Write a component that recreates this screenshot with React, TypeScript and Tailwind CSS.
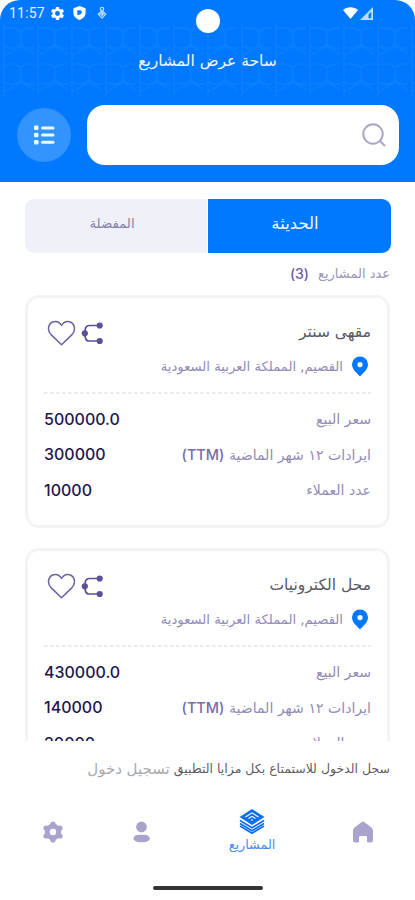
import type { ReactNode } from "react";

type Project = { id: string; title: string; location: string; price: string; revenue: string; customers: string };

const LOCATION = "القصيم, المملكة العربية السعودية";

const projects: Project[] = [
  { id: "p1", title: "مقهى سنتر", location: LOCATION, price: "500000.0", revenue: "300000", customers: "10000" },
  { id: "p2", title: "محل الكترونيات", location: LOCATION, price: "430000.0", revenue: "140000", customers: "20000" },
];

const GEAR =
  "M19.14 12.94c.04-.3.06-.61.06-.94s-.02-.64-.07-.94l2.03-1.58a.49.49 0 0 0 .12-.61l-1.92-3.32a.49.49 0 0 0-.59-.22l-2.39.96a7 7 0 0 0-1.62-.94l-.36-2.54a.48.48 0 0 0-.48-.41h-3.84a.48.48 0 0 0-.47.41l-.36 2.54c-.59.24-1.13.57-1.62.94l-2.39-.96a.48.48 0 0 0-.59.22L2.74 8.87a.48.48 0 0 0 .12.61l2.03 1.58a7.8 7.8 0 0 0 0 1.88l-2.03 1.58a.49.49 0 0 0-.12.61l1.92 3.32c.12.22.37.29.59.22l2.39-.96c.5.38 1.03.7 1.62.94l.36 2.54c.05.24.24.41.48.41h3.84c.24 0 .44-.17.47-.41l.36-2.54a7 7 0 0 0 1.62-.94l2.39.96c.22.08.47 0 .59-.22l1.92-3.32a.48.48 0 0 0-.12-.61zM12 15.6a3.6 3.6 0 1 1 0-7.2 3.6 3.6 0 0 1 0 7.2z";

function StatusBar() {
  return (
    <div className="flex h-[26px] items-center px-[9px] text-white" dir="ltr">
      <span className="w-[36px] font-[Roboto] text-[14px] tracking-[0.2px] text-[#e6f1ff]">11:57</span>
      <svg className="ml-[5px]" width="15" height="15" viewBox="1 1 22 22" fill="currentColor">
        <path d={GEAR} />
      </svg>
      <svg className="ml-[7px]" width="15" height="16" viewBox="0 0 15 16" fill="currentColor">
        <path fillRule="evenodd" d="M7.5 1 13.6 3.2v4.6c0 3.3-2.6 6-6.1 7.2-3.5-1.2-6.1-3.9-6.1-7.2V3.2zM5.3 5.2v4.800h1l2.500-.9 1.300-2-1.500-1.900z" />
      </svg>
      <svg className="ml-[9px]" width="12" height="14" viewBox="0 0 12 14" fill="none" stroke="currentColor" strokeWidth="1.2" opacity="0.75">
        <circle cx="6" cy="3" r="1.7" />
        <path d="M6 4.700 9.800 8 6 12.200 2.200 8zM4.500 8 6 6.500 7.500 8 6 9.500z" />
      </svg>
      <div className="flex-1" />
      <svg className="mr-[32px]" width="32" height="15" viewBox="0 0 32 15" fill="currentColor">
        <path d="M1 4.1C5 .3 12 .3 16 4.1L8.5 13.1z" />
        <path d="M31 1v13H18zm-1.8 4.8L26.5 8.5v3.8h2.7z" fillRule="evenodd" opacity=".75" />
      </svg>
    </div>
  );
}

function HeaderPattern() {
  return (
    <svg className="absolute left-0 top-[24px]" width="415" height="73" fill="none">
      <defs>
        <pattern id="lattice" width="34" height="36" patternUnits="userSpaceOnUse">
          <path
            d="M4 0v36M4 5Q14 2 21 7Q28 2 38 5M4 22Q14 27 21 20Q28 27 38 22M21 7v13M4 32 21 22 38 32"
            stroke="#3fa4ff"
            strokeOpacity="0.15"
            strokeWidth="1.6"
          />
        </pattern>
      </defs>
      <rect width="415" height="73" fill="url(#lattice)" />
    </svg>
  );
}

function Header() {
  return (
    <header className="relative h-[182px] bg-[#0078ff]">
      <HeaderPattern />
      <div className="absolute left-[196px] top-[9px] size-[24px] rounded-full bg-white" />
      <div className="relative">
        <StatusBar />
        <h1 className="pt-[23px] text-center text-[15.5px] leading-[24px] text-[#f1f6ff]">ساحة عرض المشاريع</h1>
        <div className="mt-[32px] flex items-center gap-[16px] pl-[17px] pr-[16px]" dir="ltr">
          <button className="flex size-[54px] items-center justify-center rounded-full bg-[#3393ff]">
            <svg width="22" height="20" viewBox="0 0 22 20" fill="#e8ffff">
              <rect x="1" y="0.5" width="4.5" height="4.5" rx="1.3" />
              <rect x="1" y="7.7" width="4.5" height="4.5" rx="1.3" />
              <rect x="1" y="15" width="4.5" height="4.5" rx="1.3" />
              <rect x="8" y="1.5" width="13.5" height="3" rx="1.5" />
              <rect x="8" y="8.5" width="13.5" height="3" rx="1.5" />
              <rect x="8" y="15.8" width="13.5" height="3" rx="1.5" />
            </svg>
          </button>
          <div className="flex h-[60px] flex-1 items-center justify-end rounded-[18px] bg-white pr-[12px]">
            <svg width="26" height="26" viewBox="0 0 26 26" fill="none" stroke="#aaa5c7" strokeWidth="2">
              <circle cx="12" cy="12" r="9.7" />
              <path d="m19 19 5 5" />
            </svg>
          </div>
        </div>
      </div>
    </header>
  );
}

function Row({ label, value }: { label: ReactNode; value: string }) {
  return (
    <div className="flex h-[35.5px] items-center justify-between">
      <span className="pt-[2px] text-[14.1px] text-[#918bb6]">{label}</span>
      <span className="font-[Inter] text-[16px] font-medium text-[#1d174d]">{value}</span>
    </div>
  );
}

function ProjectCard({ project }: { project: Project }) {
  return (
    <article className="h-[233px] shrink-0 rounded-[14px] border-[3px] border-[#f4f4f5] px-[16px] pt-[20px]">
      <div className="flex h-[30px] items-center justify-between">
        <h2 className="text-[15.5px] text-[#5a5762]">{project.title}</h2>
        <div className="flex items-center gap-[5px]" dir="ltr">
          <svg className="ml-[3px]" width="29" height="26" viewBox="0 0 29 26" fill="none" stroke="#6b62a0" strokeWidth="1.5" strokeLinejoin="round">
            <path d="M14.5 24.8 4 14.6C-.2 10 1.2 3.2 6.5 1.7c3.2-.9 6 .4 8 3.6 2-3.2 4.8-4.5 8-3.6 5.3 1.5 6.7 8.3 2.5 12.9z" />
          </svg>
          <svg width="23" height="24" viewBox="0 0 23 24" fill="none" stroke="#5b5098" strokeWidth="1.7">
            <path d="M18 4.5H8.500Q5 4.500 4.300 8L3.800 12.200 4.300 16.500Q5 20 8.500 20H18" />
            <g fill="#5b5098" stroke="none">
              <circle cx="18.7" cy="4.5" r="3.1" />
              <circle cx="3.8" cy="12.3" r="3.1" />
              <circle cx="18.7" cy="20" r="3.1" />
            </g>
          </svg>
        </div>
      </div>
      <div className="mt-[5px] flex h-[26px] items-center gap-[8px] pr-[2px]">
        <svg width="18" height="21" viewBox="0 0 18 21">
          <path fill="#0078ff" fillRule="evenodd" d="M9 .5a8 8 0 0 1 8 8c0 5-5.2 8.8-8 12-2.8-3.2-8-7-8-12a8 8 0 0 1 8-8zm0 5.500a2.600 2.600 0 1 0 0 5.200A2.600 2.600 0 0 0 9 6z" />
        </svg>
        <span className="pt-px text-[13.2px] text-[#918bb6]">{project.location}</span>
      </div>
      <svg className="mb-[7px] mt-[13px] block w-full" height="2" viewBox="0 0 327 2">
        <path d="M0 1h327" stroke="#e3e3eb" strokeWidth="1.5" strokeDasharray="3.5 2.5" />
      </svg>
      <Row label="سعر البيع" value={project.price} />
      <Row
        label={
          <>
            ايرادات ١٢ شهر الماضية <span className="font-[Inter] text-[14.500px] font-medium text-[#756da6]">(TTM)</span>
          </>
        }
        value={project.revenue}
      />
      <Row label="عدد العملاء" value={project.customers} />
    </article>
  );
}

function BottomNav() {
  return (
    <nav className="flex h-[104px] flex-col items-center" dir="ltr">
      <div className="flex h-[71px] w-full items-center pl-[42px] pt-px text-[#aaa4cc]">
        <svg width="22" height="22" viewBox="0 0 22 22" fill="currentColor">
          <circle cx="11" cy="11" r="5.700" fill="none" stroke="currentColor" strokeWidth="5" />
          <circle cx="11" cy="3" r="2.6" />
          <circle cx="18" cy="7" r="2.6" />
          <circle cx="18" cy="15" r="2.6" />
          <circle cx="11" cy="19" r="2.6" />
          <circle cx="4" cy="15" r="2.6" />
          <circle cx="4" cy="7" r="2.6" />
        </svg>
        <svg className="ml-[68px]" width="18" height="22" viewBox="0 0 18 22" fill="currentColor">
          <circle cx="9.5" cy="6" r="5.4" />
          <rect x="1.5" y="13.7" width="16.3" height="7.5" rx="5.5" ry="3.75" />
        </svg>
        <div className="ml-[78px] flex w-[48px] flex-col items-center pb-px text-[#4a8cf0]">
          <svg width="28" height="27" viewBox="0 0 28 27" fill="none">
            <path fill="#0b6ff0" d="m14 1 12.5 8L14 17 1.5 9z" />
            <path stroke="#0b6ff0" strokeWidth="1.6" d="m2 12.5 12 7.2 12-7.200M2 15.500l12 7.200 12-7.200M2 18l12 7.200L26 18" />
            <path stroke="#fff" strokeWidth="1.1" d="m7.5 9 6.5-4.2L20.5 9M10.500 10.500 14 8.300l3.500 2.200M14 11v2" />
          </svg>
          <span className="whitespace-nowrap text-[12.8px] leading-[20px]">المشاريع</span>
        </div>
        <svg className="ml-[76px]" width="22" height="22" viewBox="0 0 22 22" fill="currentColor">
          <path d="M9.5 1.2Q11 0 12.5 1.2L19.5 6.4Q21 7.6 21 9.5V19q0 2.500-2.500 2.500H16q-1 0-1-1V16.500q0-1.500-1.500-1.500h-5Q7 15 7 16.500v4q0 1-1 1H3.500Q1 21.500 1 19V9.500q0-1.900 1.500-3.100z" />
        </svg>
      </div>
      <div className="mt-[19px] h-[4px] w-[110px] rounded-full bg-[#353338]" />
    </nav>
  );
}

export default function App() {
  return (
    <div className="h-[900px] w-[415px] overflow-hidden bg-white">
      <div className="flex h-[900px] flex-col overflow-hidden rounded-t-[20px] bg-white font-['DejaVu_Sans',sans-serif]" dir="rtl">
        <Header />
        <main className="flex h-[559px] flex-col overflow-hidden px-[25px] pt-[17px]">
          <div className="flex h-[54px] w-[366px] shrink-0 gap-px self-end overflow-hidden rounded-[9px]">
            <button className="w-[183px] bg-[#0078ff] pb-[3px] pr-[9px] text-[16.5px] text-[#f3f7ff]">الحديثة</button>
            <button className="flex-1 bg-[#eff0f8] pb-[4px] pr-[8px] text-[13.3px] text-[#8983ae]">المفضلة</button>
          </div>
          <p className="mt-[8px] flex h-[24px] shrink-0 items-center gap-[9px] text-[13px] text-[#9a96b2]">
            <span className="pt-[2px]">عدد المشاريع</span>
            <span className="font-[Inter] text-[14px] font-medium text-[#675da4]">(3)</span>
          </p>
          <div className="mt-[10px] flex flex-col gap-[20px]">
            {projects.map((p) => (
              <ProjectCard key={p.id} project={p} />
            ))}
          </div>
        </main>
        <p className="flex h-[55px] items-center whitespace-nowrap px-[25px] pt-px text-[12.5px] text-[#605d66]">
          <span>سجل الدخول للاستمتاع بكل مزايا التطبيق</span>
          <a className="mr-[4px] text-[15px] text-[#aaa9ad]">تسجيل دخول</a>
        </p>
        <BottomNav />
      </div>
    </div>
  );
}
